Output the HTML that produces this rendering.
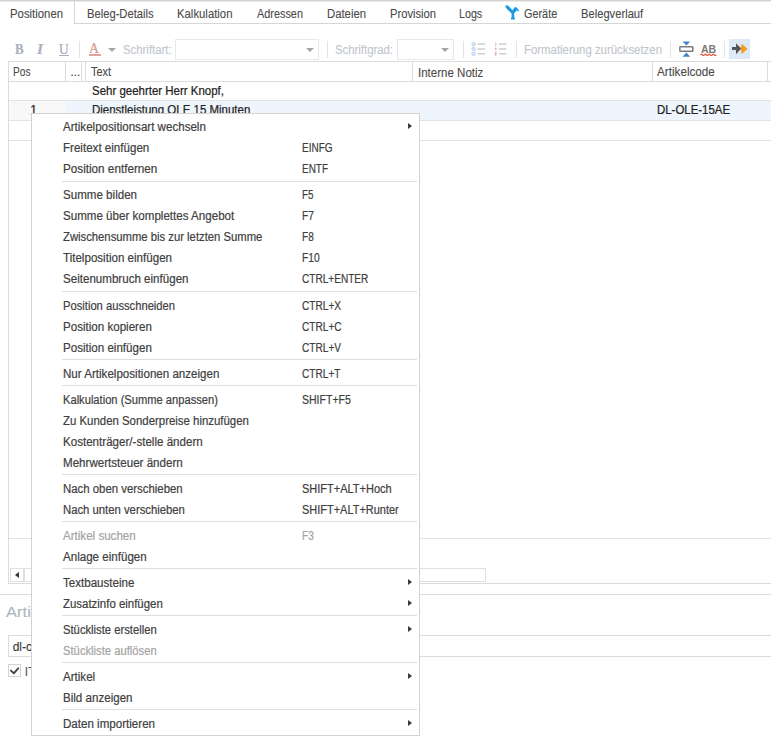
<!DOCTYPE html>
<html><head><meta charset="utf-8">
<style>
html,body{margin:0;padding:0;background:#fff;width:771px;height:747px;overflow:hidden;position:relative;font-family:"Liberation Sans",sans-serif}
.a{position:absolute}
.t{position:absolute;white-space:nowrap;transform-origin:0 0;-webkit-text-stroke:0.2px currentColor}
.hl{position:absolute;height:1px;background:#dcdcdc}
.vl{position:absolute;width:1px;background:#dcdcdc}
.sep{position:absolute;width:1px;background:#e3e3e3;top:41px;height:17px}
.cb{position:absolute;border:1px solid #e8e8e8;background:#fff;top:39px;height:19px}
.dd{position:absolute;width:0;height:0;border-left:4px solid transparent;border-right:4px solid transparent;border-top:4px solid #a6a6a6}
.msep{position:absolute;left:62px;width:355px;height:1px;background:#dedede}
.marr{position:absolute;left:408px;width:0;height:0;border-top:3.7px solid transparent;border-bottom:3.7px solid transparent;border-left:4.3px solid #3a3a3a}
#wrap{position:absolute;left:0;top:0;width:771px;height:747px}
</style></head><body><div id="wrap">
<!-- tab strip -->
<div class="a" style="left:0;top:0;width:771px;height:1px;background:#d3d2d1"></div>
<div class="a" style="left:0;top:1px;width:771px;height:1px;background:#ebebea"></div>
<div class="vl" style="left:74px;top:1px;height:23px;background:#d6d6d6"></div>
<div class="hl" style="left:74px;top:23px;width:697px;background:#d6d6d6"></div>
<!-- geraete icon -->
<svg class="a" style="left:505px;top:5px" width="16" height="16" viewBox="0 0 16 16">
<path d="M0.6 0.6 Q2.2 -0.2 3.6 0.9 L7.6 5.2 L9.6 2.2 Q11 1.8 12.2 3.2 L14.8 6.6 L11.6 5.6 L9.2 8.2 L9.2 12.2 Q10.6 13.4 9.8 14.6 L6.2 14.6 Q5.4 13.4 6.6 12.2 L6.6 8.6 Q3 5.4 0.6 2.2 Z" fill="#1d9be0"/>
</svg>
<!-- toolbar -->
<div class="t" style="left:15px;top:43px;font:bold 14px/14px 'Liberation Serif',serif;color:#aab2c0;transform:scaleX(0.92)">B</div>
<div class="t" style="left:37px;top:43px;font:italic bold 14px/14px 'Liberation Serif',serif;color:#aab2c0;transform:scaleX(1.1)">I</div>
<div class="t" style="left:58.5px;top:42.5px;font:14px/14px 'Liberation Serif',serif;color:#a3abb9;transform:scaleX(0.95)">U</div>
<div class="a" style="left:59px;top:54.5px;width:9.5px;height:1.3px;background:#aab2c0"></div>
<div class="sep" style="left:79px"></div>
<div class="t" style="left:89px;top:41.5px;font:14px/14px 'Liberation Serif',serif;color:#d99891;">A</div>
<div class="a" style="left:89px;top:53.5px;width:12px;height:2px;background:#e3a29c"></div>
<div class="dd" style="left:108px;top:48px"></div>
<div class="cb" style="left:175px;width:142px"></div>
<div class="dd" style="left:306px;top:48px"></div>
<div class="sep" style="left:327px"></div>
<div class="cb" style="left:397px;width:55px"></div>
<div class="dd" style="left:441px;top:48px"></div>
<div class="sep" style="left:463px"></div>
<svg class="a" style="left:470px;top:40px" width="40" height="18" viewBox="0 0 40 18">
<g fill="#e3edf9" stroke="#b3cbea" stroke-width="0.9"><circle cx="3.6" cy="4.1" r="1.7"/><circle cx="3.6" cy="9" r="1.7"/><circle cx="3.6" cy="13.8" r="1.7"/></g>
<g fill="#cbcbcb"><rect x="7.6" y="3.4" width="7.6" height="1.4"/><rect x="7.6" y="8.3" width="7.6" height="1.4"/><rect x="7.6" y="13.1" width="7.6" height="1.4"/></g>
<g fill="#eab8b8"><rect x="25.2" y="2.6" width="1.2" height="3.6"/><rect x="24.8" y="7.6" width="1.8" height="2.6"/><rect x="24.8" y="11.8" width="1.8" height="4"/></g>
<g fill="#cbcbcb"><rect x="28.8" y="3.4" width="7.6" height="1.4"/><rect x="28.8" y="8.3" width="7.6" height="1.4"/><rect x="28.8" y="13.1" width="7.6" height="1.4"/></g>
</svg>
<div class="sep" style="left:516px"></div>
<div class="sep" style="left:670px"></div>
<svg class="a" style="left:678px;top:41px" width="17" height="17" viewBox="0 0 17 17">
<path d="M4.6 0.4 H12.2 L8.4 4.4 Z" fill="#3d85c6"/>
<rect x="1.85" y="5.75" width="13" height="4.6" rx="0.6" fill="none" stroke="#7a7a7a" stroke-width="1.5"/>
<path d="M4.6 15.8 H12.2 L8.4 11.6 Z" fill="#3d85c6"/>
</svg>
<div class="t" style="left:701px;top:44px;font:bold 10.5px/10.5px 'Liberation Sans',sans-serif;color:#7a7a7a;-webkit-text-stroke:0;transform:scaleX(1.0)">AB</div>
<svg class="a" style="left:700px;top:52.5px" width="17" height="3" viewBox="0 0 17 3">
<path d="M0.3 1.8 Q1.3 0.4 2.3 1.8 T4.3 1.8 T6.3 1.8 T8.3 1.8 T10.3 1.8 T12.3 1.8 T14.3 1.8 T16.3 1.8" fill="none" stroke="#e25a45" stroke-width="1.3"/>
</svg>
<div class="sep" style="left:724px"></div>
<div class="a" style="left:729px;top:39px;width:21px;height:20px;background:#dde9f6"></div>
<svg class="a" style="left:731px;top:43px" width="18" height="12" viewBox="0 0 18 12">
<path d="M1 4 H5 V0.6 L10.1 5.6 L5 10.9 V7.1 H1 Z" fill="#555"/>
<path d="M10.7 0.8 L16.5 5.9 L10.7 11 L9.8 5.8 Z" fill="#f59a1c"/>
<path d="M5 0.6 L10.1 5.6 L5 10.9 Z" fill="#555"/>
</svg>
<!-- grid -->
<div class="hl" style="left:8px;top:61px;width:763px"></div>
<div class="hl" style="left:8px;top:81px;width:763px"></div>
<div class="vl" style="left:8px;top:61px;height:523px"></div>
<div class="vl" style="left:65px;top:61px;height:20px"></div>
<div class="vl" style="left:81px;top:61px;height:20px"></div>
<div class="vl" style="left:85px;top:61px;height:20px"></div>
<div class="vl" style="left:412px;top:61px;height:20px"></div>
<div class="vl" style="left:652px;top:61px;height:20px"></div>
<div class="vl" style="left:767px;top:61px;height:20px"></div>
<div class="t" style="left:70.5px;top:67px;font-size:11.5px;line-height:11.5px;color:#454545">...</div>
<div class="a" style="left:9px;top:101px;width:57px;height:19px;background:#f8f8f8"></div>
<div class="a" style="left:66px;top:101px;width:705px;height:19px;background:#eef5fc"></div>
<div class="hl" style="left:9px;top:100px;width:762px;background:#e3e3e3"></div>
<div class="hl" style="left:9px;top:120px;width:762px;background:#e3e3e3"></div>
<div class="hl" style="left:9px;top:140px;width:762px;background:#e3e3e3"></div>
<div class="hl" style="left:9px;top:538px;width:762px;background:#e3e3e3"></div>
<!-- h scrollbar -->
<div class="a" style="left:10px;top:568px;width:12px;height:12px;border:1px solid #e0e0e0;background:#fff"></div>
<div class="a" style="left:15px;top:572px;width:0;height:0;border-top:3px solid transparent;border-bottom:3px solid transparent;border-right:4px solid #333"></div>
<div class="a" style="left:24px;top:568px;width:460px;height:12px;border:1px solid #e0e0e0;background:#fff"></div>
<div class="hl" style="left:8px;top:583px;width:763px"></div>
<!-- bottom -->
<div class="hl" style="left:0;top:594px;width:771px"></div>
<div class="a" style="left:8px;top:635px;width:770px;height:20px;border:1px solid #dcdcdc;background:#fff"></div>
<div class="a" style="left:8px;top:664px;width:11px;height:11px;border:1px solid #d2d2d2;background:#fff"></div>
<svg class="a" style="left:9px;top:665px" width="12" height="12" viewBox="0 0 12 12"><path d="M1.9 5.6 L4.8 8.3 L9.2 3.3" fill="none" stroke="#444" stroke-width="1.9" stroke-linecap="round" stroke-linejoin="round"/></svg>
<div class="t" style="-webkit-text-stroke:0.1px currentColor;left:10.0px;top:8px;font-size:12px;line-height:12px;color:#4a4a4a;transform:scaleX(0.946);">Positionen</div>
<div class="t" style="-webkit-text-stroke:0.1px currentColor;left:87.0px;top:8px;font-size:12px;line-height:12px;color:#4a4a4a;transform:scaleX(0.933);">Beleg-Details</div>
<div class="t" style="-webkit-text-stroke:0.1px currentColor;left:177.4px;top:8px;font-size:12px;line-height:12px;color:#4a4a4a;transform:scaleX(0.945);">Kalkulation</div>
<div class="t" style="-webkit-text-stroke:0.1px currentColor;left:256.8px;top:8px;font-size:12px;line-height:12px;color:#4a4a4a;transform:scaleX(0.907);">Adressen</div>
<div class="t" style="-webkit-text-stroke:0.1px currentColor;left:327.0px;top:8px;font-size:12px;line-height:12px;color:#4a4a4a;transform:scaleX(0.943);">Dateien</div>
<div class="t" style="-webkit-text-stroke:0.1px currentColor;left:389.5px;top:8px;font-size:12px;line-height:12px;color:#4a4a4a;transform:scaleX(0.932);">Provision</div>
<div class="t" style="-webkit-text-stroke:0.1px currentColor;left:458.8px;top:8px;font-size:12px;line-height:12px;color:#4a4a4a;transform:scaleX(0.892);">Logs</div>
<div class="t" style="-webkit-text-stroke:0.1px currentColor;left:523.7px;top:8px;font-size:12px;line-height:12px;color:#4a4a4a;transform:scaleX(0.905);">Geräte</div>
<div class="t" style="-webkit-text-stroke:0.1px currentColor;left:580.8px;top:8px;font-size:12px;line-height:12px;color:#4a4a4a;transform:scaleX(0.932);">Belegverlauf</div>
<div class="t" style="-webkit-text-stroke:0.1px currentColor;left:123.4px;top:44px;font-size:12px;line-height:12px;color:#c0c5cc;transform:scaleX(0.947);">Schriftart:</div>
<div class="t" style="-webkit-text-stroke:0.1px currentColor;left:335.4px;top:44px;font-size:12px;line-height:12px;color:#c0c5cc;transform:scaleX(0.945);">Schriftgrad:</div>
<div class="t" style="-webkit-text-stroke:0.1px currentColor;left:524.2px;top:44px;font-size:12px;line-height:12px;color:#c0c5cc;transform:scaleX(0.949);">Formatierung zurücksetzen</div>
<div class="t" style="-webkit-text-stroke:0.1px currentColor;left:13.0px;top:66px;font-size:12px;line-height:12px;color:#4a4a4a;transform:scaleX(0.846);">Pos</div>
<div class="t" style="-webkit-text-stroke:0.1px currentColor;left:90.8px;top:66px;font-size:12px;line-height:12px;color:#4a4a4a;transform:scaleX(0.909);">Text</div>
<div class="t" style="-webkit-text-stroke:0.1px currentColor;left:417.8px;top:67px;font-size:12px;line-height:12px;color:#4a4a4a;transform:scaleX(0.960);">Interne Notiz</div>
<div class="t" style="-webkit-text-stroke:0.1px currentColor;left:657.0px;top:66px;font-size:12px;line-height:12px;color:#4a4a4a;transform:scaleX(0.974);">Artikelcode</div>
<div class="t" style="-webkit-text-stroke:0.22px currentColor;left:92.0px;top:85px;font-size:12px;line-height:12px;color:#222;transform:scaleX(0.956);">Sehr geehrter Herr Knopf,</div>
<div class="t" style="-webkit-text-stroke:0.22px currentColor;left:92.0px;top:104px;font-size:12px;line-height:12px;color:#222;transform:scaleX(0.957);">Dienstleistung OLE 15 Minuten</div>
<div class="t" style="-webkit-text-stroke:0.22px currentColor;left:657.0px;top:104px;font-size:12px;line-height:12px;color:#222;transform:scaleX(0.952);">DL-OLE-15AE</div>
<div class="t" style="-webkit-text-stroke:0.22px currentColor;left:30.3px;top:104px;font-size:12px;line-height:12px;color:#222;">1</div>
<div class="t" style="-webkit-text-stroke:0.1px currentColor;left:6.0px;top:604px;font-size:15px;line-height:15px;color:#adb5c1;transform:scaleX(1.104);">Artikel</div>
<div class="t" style="-webkit-text-stroke:0.1px currentColor;left:12.7px;top:641px;font-size:12px;line-height:12px;color:#333;">dl-cole-15ae</div>
<div class="t" style="-webkit-text-stroke:0.1px currentColor;left:24.8px;top:666px;font-size:12px;line-height:12px;color:#555;">ITEM</div>
<!-- menu -->
<div class="a" style="left:31px;top:113px;width:387px;height:621px;border:1px solid #d2d2d2;background:#fff"></div>
<div class="msep" style="top:181px"></div>
<div class="msep" style="top:291px"></div>
<div class="msep" style="top:359px"></div>
<div class="msep" style="top:385px"></div>
<div class="msep" style="top:474px"></div>
<div class="msep" style="top:521px"></div>
<div class="msep" style="top:568px"></div>
<div class="msep" style="top:615px"></div>
<div class="msep" style="top:662px"></div>
<div class="msep" style="top:709px"></div>
<div class="marr" style="top:123.0px"></div>
<div class="marr" style="top:578.8px"></div>
<div class="marr" style="top:599.8px"></div>
<div class="marr" style="top:625.9px"></div>
<div class="marr" style="top:673.0px"></div>
<div class="marr" style="top:720.0px"></div>
<div class="t" style="left:62.8px;top:121px;font-size:12px;line-height:12px;color:#404040;transform:scaleX(0.965);">Artikelpositionsart wechseln</div>
<div class="t" style="left:62.8px;top:142px;font-size:12px;line-height:12px;color:#404040;transform:scaleX(0.965);">Freitext einfügen</div>
<div class="t" style="left:301.8px;top:142px;font-size:12px;line-height:12px;color:#404040;transform:scaleX(0.832);">EINFG</div>
<div class="t" style="left:62.8px;top:163px;font-size:12px;line-height:12px;color:#404040;transform:scaleX(0.975);">Position entfernen</div>
<div class="t" style="left:301.8px;top:163px;font-size:12px;line-height:12px;color:#404040;transform:scaleX(0.830);">ENTF</div>
<div class="t" style="left:62.8px;top:189px;font-size:12px;line-height:12px;color:#404040;transform:scaleX(0.965);">Summe bilden</div>
<div class="t" style="left:301.8px;top:189px;font-size:12px;line-height:12px;color:#404040;transform:scaleX(0.814);">F5</div>
<div class="t" style="left:62.8px;top:210px;font-size:12px;line-height:12px;color:#404040;transform:scaleX(0.965);">Summe über komplettes Angebot</div>
<div class="t" style="left:301.8px;top:210px;font-size:12px;line-height:12px;color:#404040;transform:scaleX(0.843);">F7</div>
<div class="t" style="left:62.8px;top:231px;font-size:12px;line-height:12px;color:#404040;transform:scaleX(0.940);">Zwischensumme bis zur letzten Summe</div>
<div class="t" style="left:301.8px;top:231px;font-size:12px;line-height:12px;color:#404040;transform:scaleX(0.843);">F8</div>
<div class="t" style="left:62.8px;top:252px;font-size:12px;line-height:12px;color:#404040;transform:scaleX(0.965);">Titelposition einfügen</div>
<div class="t" style="left:301.8px;top:252px;font-size:12px;line-height:12px;color:#404040;transform:scaleX(0.851);">F10</div>
<div class="t" style="left:62.8px;top:273px;font-size:12px;line-height:12px;color:#404040;transform:scaleX(0.965);">Seitenumbruch einfügen</div>
<div class="t" style="left:301.8px;top:273px;font-size:12px;line-height:12px;color:#404040;transform:scaleX(0.840);">CTRL+ENTER</div>
<div class="t" style="left:62.8px;top:300px;font-size:12px;line-height:12px;color:#404040;transform:scaleX(0.933);">Position ausschneiden</div>
<div class="t" style="left:301.8px;top:300px;font-size:12px;line-height:12px;color:#404040;transform:scaleX(0.843);">CTRL+X</div>
<div class="t" style="left:62.8px;top:321px;font-size:12px;line-height:12px;color:#404040;transform:scaleX(0.965);">Position kopieren</div>
<div class="t" style="left:301.8px;top:321px;font-size:12px;line-height:12px;color:#404040;transform:scaleX(0.843);">CTRL+C</div>
<div class="t" style="left:62.8px;top:342px;font-size:12px;line-height:12px;color:#404040;transform:scaleX(0.965);">Position einfügen</div>
<div class="t" style="left:301.8px;top:342px;font-size:12px;line-height:12px;color:#404040;transform:scaleX(0.843);">CTRL+V</div>
<div class="t" style="left:62.8px;top:368px;font-size:12px;line-height:12px;color:#404040;transform:scaleX(0.965);">Nur Artikelpositionen anzeigen</div>
<div class="t" style="left:301.8px;top:368px;font-size:12px;line-height:12px;color:#404040;transform:scaleX(0.843);">CTRL+T</div>
<div class="t" style="left:62.8px;top:394px;font-size:12px;line-height:12px;color:#404040;transform:scaleX(0.929);">Kalkulation (Summe anpassen)</div>
<div class="t" style="left:301.8px;top:394px;font-size:12px;line-height:12px;color:#404040;transform:scaleX(0.877);">SHIFT+F5</div>
<div class="t" style="left:62.8px;top:415px;font-size:12px;line-height:12px;color:#404040;transform:scaleX(0.951);">Zu Kunden Sonderpreise hinzufügen</div>
<div class="t" style="left:62.8px;top:436px;font-size:12px;line-height:12px;color:#404040;transform:scaleX(0.965);">Kostenträger/-stelle ändern</div>
<div class="t" style="left:62.8px;top:457px;font-size:12px;line-height:12px;color:#404040;transform:scaleX(0.965);">Mehrwertsteuer ändern</div>
<div class="t" style="left:62.8px;top:483px;font-size:12px;line-height:12px;color:#404040;transform:scaleX(0.949);">Nach oben verschieben</div>
<div class="t" style="left:301.8px;top:483px;font-size:12px;line-height:12px;color:#404040;transform:scaleX(0.917);">SHIFT+ALT+Hoch</div>
<div class="t" style="left:62.8px;top:504px;font-size:12px;line-height:12px;color:#404040;transform:scaleX(0.942);">Nach unten verschieben</div>
<div class="t" style="left:301.8px;top:504px;font-size:12px;line-height:12px;color:#404040;transform:scaleX(0.914);">SHIFT+ALT+Runter</div>
<div class="t" style="left:62.8px;top:530px;font-size:12px;line-height:12px;color:#a3a3a3;transform:scaleX(0.965);">Artikel suchen</div>
<div class="t" style="left:301.8px;top:530px;font-size:12px;line-height:12px;color:#a3a3a3;transform:scaleX(0.843);">F3</div>
<div class="t" style="left:62.8px;top:551px;font-size:12px;line-height:12px;color:#404040;transform:scaleX(0.965);">Anlage einfügen</div>
<div class="t" style="left:62.8px;top:577px;font-size:12px;line-height:12px;color:#404040;transform:scaleX(0.965);">Textbausteine</div>
<div class="t" style="left:62.8px;top:598px;font-size:12px;line-height:12px;color:#404040;transform:scaleX(0.953);">Zusatzinfo einfügen</div>
<div class="t" style="left:62.8px;top:624px;font-size:12px;line-height:12px;color:#404040;transform:scaleX(0.937);">Stückliste erstellen</div>
<div class="t" style="left:62.8px;top:645px;font-size:12px;line-height:12px;color:#a3a3a3;transform:scaleX(0.937);">Stückliste auflösen</div>
<div class="t" style="left:62.8px;top:671px;font-size:12px;line-height:12px;color:#404040;transform:scaleX(0.965);">Artikel</div>
<div class="t" style="left:62.8px;top:692px;font-size:12px;line-height:12px;color:#404040;transform:scaleX(0.965);">Bild anzeigen</div>
<div class="t" style="left:62.8px;top:718px;font-size:12px;line-height:12px;color:#404040;transform:scaleX(0.965);">Daten importieren</div>
</div></body></html>
